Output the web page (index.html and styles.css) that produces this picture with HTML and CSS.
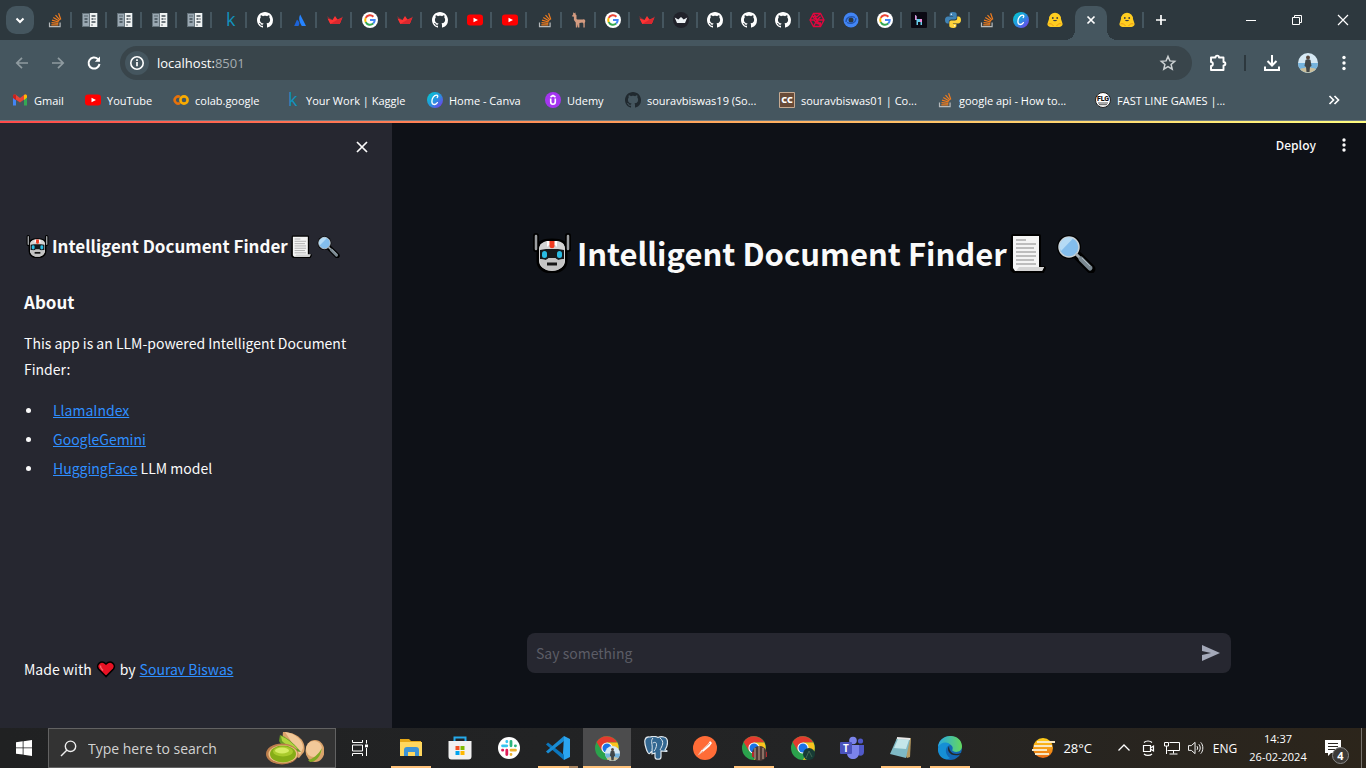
FILE: index.html
```html
<!DOCTYPE html>
<html lang="en">
<head>
<meta charset="utf-8">
<meta name="viewport" content="width=device-width, initial-scale=1">
<title>Intelligent Document Finder</title>
<link rel="stylesheet" href="styles.css">
</head>
<body>
<svg class="sprite" aria-hidden="true">
  <symbol id="so" viewBox="0 0 16 16"><path d="M2.500 10.500v4.200h10.600v-4.200" fill="none" stroke="#b5b9bb" stroke-width="1.200"/><path d="M4.300 12.800h7M4.500 10.600l6.800.7M5 8.200l6.600 1.800M6.300 5.600l5.900 3.400M8.500 3.200l4.500 5M11.600 1.300l2.200 6.200" stroke="#f07c1e" stroke-width="1.200"/></symbol>
  <symbol id="sheet" viewBox="0 0 16 16"><path d="M0 1h16v14H0z" fill="#65737b"/><path d="M1 2h6v12H1z" fill="#9aa8b2"/><path d="M8 1h7v14H8z" fill="#f0f3f3"/><path d="M2.500 4h1m1 0h1m-3 3h3m-3 3h3M9.500 4h4m-4 3h2m1 0h1m-4 3h4m-4 3h1" stroke="#3f4b53" stroke-width="1.300"/></symbol>
  <symbol id="gh" viewBox="0 0 16 16"><path fill="currentColor" d="M8 0C3.580 0 0 3.580 0 8c0 3.540 2.290 6.530 5.470 7.590.4.07.55-.17.55-.38 0-.19-.01-.82-.01-1.490-2.010.37-2.530-.49-2.690-.94-.09-.23-.48-.94-.82-1.130-.28-.15-.68-.52-.01-.53.63-.01 1.080.58 1.230.82.72 1.210 1.870.87 2.330.66.07-.52.28-.87.51-1.070-1.780-.2-3.640-.89-3.640-3.950 0-.87.31-1.590.82-2.150-.08-.2-.36-1.020.08-2.120 0 0 .67-.21 2.200.82.64-.18 1.320-.27 2-.27s1.360.09 2 .27c1.530-1.040 2.200-.82 2.200-.82.44 1.100.16 1.920.08 2.120.51.56.82 1.270.82 2.150 0 3.070-1.870 3.750-3.650 3.950.29.25.54.73.54 1.480 0 1.070-.01 1.930-.01 2.200 0 .21.15.46.55.38A8.010 8.010 0 0 0 16 8c0-4.420-3.580-8-8-8z"/></symbol>
  <symbol id="atl" viewBox="0 0 16 16"><path d="M5 7.500c2.600 2.200 3 4.300 1.500 6.500H2.200z" fill="#1d63d8"/><path d="M8.200 2.500 14 14H9.800C7.200 9.600 6.300 6.300 8.200 2.500z" fill="#2684ff"/></symbol>
  <symbol id="crown" viewBox="0 0 16 16"><path d="M0 4l5.500 4L2.800 11z" fill="#7d3339"/><path d="M16 4.500l-5.500 3.500 2.700 3z" fill="#a8333b"/><path d="M.5 6.500 5.500 8 8 4l2.500 3.500L15 6l-2.300 6H3.300z" fill="#f33"/><path d="M3.300 12 11 7.200l4-1.200-2.300 6z" fill="#d9282f"/></symbol>
  <symbol id="goog" viewBox="0 0 16 16"><circle cx="8" cy="8" r="8" fill="#fff"/><g fill="none" stroke-width="2"><path d="M11.400 4.700A4.800 4.800 0 0 0 3.700 5.900" stroke="#ea4335"/><path d="M3.700 5.900a4.800 4.800 0 0 0 0 4.300" stroke="#fbbc05"/><path d="M3.700 10.100a4.800 4.800 0 0 0 7.500 1.500" stroke="#34a853"/><path d="M11.200 11.600A4.800 4.800 0 0 0 12.700 8H8" stroke="#4285f4"/></g></symbol>
  <symbol id="yt" viewBox="0 0 16 16"><rect y="2.500" width="16" height="11" rx="3" fill="#f00"/><path d="m6.500 5.800 4.500 2.200-4.500 2.200z" fill="#fff"/></symbol>
  <symbol id="llama" viewBox="0 0 16 16"><path d="M2.200 2.200 2 .3l1.200 1L4.500.5v1.700l1 1V7l1 .5H12c1.500-.6 2.600.8 2.200 2.300l-.5 1.200v4.400h-1.300v-3.800l-1-1-3 .4v4.400H7v-3.500l-.8 3.500H4.900l-.2-5L2.900 8V4.800L.8 4.300z" fill="#d49b80"/></symbol>
  <symbol id="blackcrown" viewBox="0 0 16 16"><circle cx="8" cy="8" r="8" fill="#20222a"/><path d="M1.700 5.500 5.300 7.500 8 5l2.700 2.500 3.600-2-2.300 5.500H4z" fill="#edf2f5"/></symbol>
  <symbol id="hex" viewBox="0 0 16 16"><g fill="none" stroke="#e3063e" stroke-width="1.300"><path d="M4.500 1.500h7L15 8l-3.500 6.500h-7L1 8z"/><path d="M4.500 1.500 8 8l-3.500 6.500M11.500 1.500 8 4.700 5 3M15 8H8l-4-2.500M11.500 14.500 8 8l3.500-3.300M1 8h4l3 3.500 4 1M2.800 4.700 8 4.700M12 11H8"/></g></symbol>
  <symbol id="swirl" viewBox="0 0 16 16"><circle cx="8" cy="8" r="7.500" fill="#4285f4"/><circle cx="8" cy="8" r="2.500" fill="#2d383e"/><path d="M3 10C3 5 8 3.500 12 5.500M13 6c0 5-5 6.500-9 4.500" stroke="#2355ae" stroke-width="1.300" fill="none"/></symbol>
  <symbol id="lamaidx" viewBox="0 0 16 16"><rect width="16" height="16" rx="1" fill="#0b0913"/><path d="M4 3l1.500 1V7H11v6H9.500v-3H7v3H5.500V8H4.200z" fill="#68cce9"/><path d="M4 3l1.500 1V8H4.200zM9 7h2v3H9z" fill="#ef8edb"/></symbol>
  <symbol id="py" viewBox="0 0 16 16"><path d="M7.900 0C5 0 4.600 1.200 4.600 2.200V4h3.500v.6H2.800C1.200 4.600 0 5.800 0 8s1 3.600 2.400 3.600h1.400V9.700c0-1.300 1.100-2.300 2.400-2.300h3.600c1.100 0 1.900-.9 1.900-1.900V2.200C11.700.9 10.500 0 7.900 0z" fill="#4083b5"/><path d="M7.900 0C5 0 4.600 1.200 4.600 2.200V4h3.500v.6H2.800C1.200 4.600 0 5.800 0 8s1 3.600 2.400 3.600h1.400V9.700c0-1.300 1.100-2.300 2.400-2.300h3.600c1.100 0 1.900-.9 1.900-1.900V2.200C11.700.9 10.500 0 7.900 0z" fill="#ffd43b" transform="rotate(180 8 8)"/><circle cx="6.300" cy="2.200" r=".7" fill="#fff"/><circle cx="9.700" cy="13.800" r=".7" fill="#fff"/></symbol>
  <linearGradient id="cg" x1="0" y1="0" x2="1" y2="1"><stop offset="0" stop-color="#00d1cf"/><stop offset=".5" stop-color="#2495df"/><stop offset="1" stop-color="#812cef"/></linearGradient>
  <symbol id="canva" viewBox="0 0 16 16"><circle cx="8" cy="8" r="8" fill="url(#cg)"/><path d="M10.200 5.500c1-.9.700-2.300-.7-2.300-2.500 0-4.600 3.300-4.600 6.200 0 3.700 3.200 4.100 5.500 1.200" fill="none" stroke="#fff" stroke-width="1.300" stroke-linecap="round"/></symbol>
  <symbol id="hug" viewBox="0 0 16 16"><path d="M2 7a6 6.200 0 0 1 12 0l1.500 4.500c.5 2-1.500 3.500-4 3.500h-7C2 15 0 13.500.5 11.500z" fill="#ffcd20"/><path d="M1.500 12c2-1 4 .3 5 2m8-2c-2-1-4 .3-5 2" stroke="#ef9c18" fill="none"/><circle cx="5.800" cy="6" r=".9" fill="#3a3b44"/><circle cx="10.200" cy="6" r=".9" fill="#3a3b44"/><path d="M5.800 8c1.200 1.800 3.200 1.800 4.400 0z" fill="#3a3b44"/></symbol>
  <symbol id="gmail" viewBox="0 0 16 16"><path d="M1 4v9.500h3V6z" fill="#4285f4"/><path d="M12 6v7.500h3V4z" fill="#34a853"/><path d="M1 5.500V4c0-1.700 1.700-2 2.800-1.200L8 6l4.200-3.200C13.300 2 15 2.300 15 4v1.500l-7 5z" fill="#ea4335"/><path d="M12 3v5l3-2.500V4c0-1.700-2-2-3-1z" fill="#fbbc04"/><path d="M1 4v2l3 2.200V3C2.500 2 1 2.500 1 4z" fill="#c5221f"/></symbol>
  <symbol id="colab" viewBox="0 0 16 16"><g fill="none" stroke-width="2.600"><path d="M7 5a3.500 3.500 0 1 0 0 6" stroke="#e8710a"/><circle cx="11" cy="8" r="3.600" stroke="#f9ab00"/></g></symbol>
  <symbol id="udemy" viewBox="0 0 16 16"><circle cx="8" cy="8" r="8" fill="#a435f0"/><path d="M5.500 5 8 3.500 10.500 5M5.700 6.500v3.300c0 3.200 4.600 3.200 4.600 0V6.500" fill="none" stroke="#fff" stroke-width="1.600"/></symbol>
  <symbol id="robot" viewBox="0 0 38 40"><path d="M3 3v13M35 3v13" stroke="#000" stroke-width="6" stroke-linecap="round"/><path d="M5 14C5 9 10 7 19 7s14 2 14 7v14c0 7-6 11-14 11S5 35 5 28z" fill="#ccc" stroke="#000" stroke-width="3"/><path d="M3 3v13M35 3v13" stroke="#9a9da0" stroke-width="2.500" stroke-linecap="round"/><path d="M6 15c2-5 5-7 9-7h8c5 0 8 2 9 7v13c0 12-26 12-26 0z" fill="#d3d3d3"/><path d="M14 8h10v6l-2-2h-6l-2 2z" fill="#fff"/><path d="M16.500 8h5v5c0 3-5 3-5 0z" fill="#f03b20"/><path d="M7 17l6-1h12l6 1v9l-6 1-3-2h-6l-3 2-6-1z" fill="#15191c"/><rect x="9" y="18" width="5" height="7" rx="2.500" fill="#29bce4"/><rect x="24" y="18" width="5" height="7" rx="2.500" fill="#29bce4"/><path d="M7 26l6 1 3-2h6l3 2 6-1c0 6-3 12-12 12S7 32 7 26z" fill="#c3c3c3"/><path d="M14 31h10" stroke="#151515" stroke-width="3"/></symbol>
  <symbol id="scroll" viewBox="0 0 36 40"><path d="M3 3h26v32h5l-2 4H5l-3-3z" fill="#fff" stroke="#000" stroke-width="4" stroke-linejoin="round"/><path d="M3 3h26v31h5l-2 4H5l-2-3z" fill="#f4f4f4"/><path d="M9 34h25l-2 4H6z" fill="#d4d4d4"/><path d="M6 7h10M6 11h20M6 15h18M6 19h20M6 23h20M6 27h18M6 31h20" stroke="#aaa" stroke-width="1.500"/></symbol>
  <symbol id="mag" viewBox="0 0 40 40"><circle cx="13" cy="14" r="12" fill="#000"/><path d="M22 23l13 13" stroke="#000" stroke-width="9" stroke-linecap="round"/><circle cx="13" cy="14" r="10" fill="#83bdec" stroke="#c9d2d7" stroke-width="1.500"/><path d="M5 18A9 9 0 0 1 17 5.500z" fill="#b5dbf5"/><path d="m20 21 4 4" stroke="#a3adb3" stroke-width="3"/><path d="m25 26 9 9" stroke="#7b8992" stroke-width="5" stroke-linecap="round"/><path d="m26 25 8 8" stroke="#aebbc1" stroke-width="1"/></symbol>
  <symbol id="man" viewBox="0 0 20 20"><circle cx="10" cy="10" r="10" fill="#d6e9f4"/><path d="M0 10h20a10 10 0 0 1-20 0z" fill="#76b4dd"/><path d="M2 16c5-2 11-2 16 0-4 5-12 5-16 0z" fill="#cbbf9c"/><path d="M7.500 7c1-1 4-1 5 0l1 6-1.500 1-.5 5h-3L8 14l-1.500-1z" fill="#414749"/><circle cx="10" cy="4.500" r="2" fill="#59483e"/></symbol>
  <symbol id="chrome" viewBox="0 0 24 24"><circle cx="12" cy="12" r="12" fill="#2ba24c"/><path d="M1.600 6A12 12 0 0 1 22.400 6.600H12L7 15z" fill="#e33b2e"/><path d="M22.400 6.600A12 12 0 0 1 12 24l5-9.500-5-7.900z" fill="#fcc31e"/><circle cx="12" cy="12" r="5.600" fill="#fff"/><circle cx="12" cy="12" r="4.500" fill="#1a73e8"/></symbol>
</svg>

<header class="browser">
  <div class="tabstrip">
    <button class="tab-search" aria-label="Search tabs"><svg viewBox="0 0 28 28" width="28" height="28"><path d="m10.500 12.500 3.500 3.500 3.500-3.500" fill="none" stroke="#fff" stroke-width="2"/></svg></button>
    <nav class="tabs" aria-label="Tabs">
      <button class="tab" aria-label="Stack Overflow"><svg><use href="#so"/></svg></button>
      <button class="tab" aria-label="Document"><svg><use href="#sheet"/></svg></button>
      <button class="tab" aria-label="Document"><svg><use href="#sheet"/></svg></button>
      <button class="tab" aria-label="Document"><svg><use href="#sheet"/></svg></button>
      <button class="tab" aria-label="Document"><svg><use href="#sheet"/></svg></button>
      <button class="tab" aria-label="Kaggle"><svg class="kaggle" viewBox="0 0 16 16"><text x="4" y="14">k</text></svg></button>
      <button class="tab" aria-label="GitHub"><svg><use href="#gh"/></svg></button>
      <button class="tab" aria-label="Atlassian"><svg><use href="#atl"/></svg></button>
      <button class="tab" aria-label="Streamlit"><svg><use href="#crown"/></svg></button>
      <button class="tab" aria-label="Google"><svg><use href="#goog"/></svg></button>
      <button class="tab" aria-label="Streamlit"><svg><use href="#crown"/></svg></button>
      <button class="tab" aria-label="GitHub"><svg><use href="#gh"/></svg></button>
      <button class="tab" aria-label="YouTube"><svg><use href="#yt"/></svg></button>
      <button class="tab" aria-label="YouTube"><svg><use href="#yt"/></svg></button>
      <button class="tab" aria-label="Stack Overflow"><svg><use href="#so"/></svg></button>
      <button class="tab narrow" aria-label="Llama"><svg><use href="#llama"/></svg></button>
      <button class="tab narrow" aria-label="Google"><svg><use href="#goog"/></svg></button>
      <button class="tab narrow" aria-label="Streamlit"><svg><use href="#crown"/></svg></button>
      <button class="tab narrow" aria-label="Streamlit Cloud"><svg><use href="#blackcrown"/></svg></button>
      <button class="tab narrow" aria-label="GitHub"><svg><use href="#gh"/></svg></button>
      <button class="tab narrow" aria-label="GitHub"><svg><use href="#gh"/></svg></button>
      <button class="tab narrow" aria-label="GitHub"><svg><use href="#gh"/></svg></button>
      <button class="tab narrow" aria-label="Knot"><svg><use href="#hex"/></svg></button>
      <button class="tab narrow" aria-label="Google AI"><svg><use href="#swirl"/></svg></button>
      <button class="tab narrow" aria-label="Google"><svg><use href="#goog"/></svg></button>
      <button class="tab narrow" aria-label="LlamaIndex"><svg><use href="#lamaidx"/></svg></button>
      <button class="tab narrow" aria-label="Python"><svg><use href="#py"/></svg></button>
      <button class="tab narrow" aria-label="Stack Overflow"><svg><use href="#so"/></svg></button>
      <button class="tab narrow" aria-label="Canva"><svg><use href="#canva"/></svg></button>
      <button class="tab narrow last" aria-label="Hugging Face"><svg><use href="#hug"/></svg></button>
      <button class="tab active" aria-label="Close tab"><svg viewBox="0 0 16 16"><path d="m4.500 4.500 7 7m0-7-7 7" stroke="#fff" stroke-width="1.700"/></svg></button>
      <button class="tab narrow after" aria-label="Hugging Face"><svg><use href="#hug"/></svg></button>
      <button class="tab narrow newtab" aria-label="New tab"><svg viewBox="0 0 16 16"><path d="M8 3v10M3 8h10" stroke="#fff" stroke-width="1.700"/></svg></button>
    </nav>
    <div class="winbtns">
      <button aria-label="Minimize"><svg viewBox="0 0 12 12"><path d="M1 6.500h10" stroke="#fff"/></svg></button>
      <button aria-label="Restore"><svg viewBox="0 0 12 12"><path d="M1.500 3.500h7v7h-7zM3.500 3.500v-2h7v7h-2" fill="none" stroke="#fff"/></svg></button>
      <button aria-label="Close"><svg viewBox="0 0 12 12"><path d="m1 1 10 10M11 1 1 11" stroke="#fff" stroke-width="1.200"/></svg></button>
    </div>
  </div>
  <div class="toolbar">
    <div class="navbtns">
      <button aria-label="Back"><svg viewBox="0 0 16 16"><path d="M14 8H3m5-5.200L2.800 8 8 13.200" fill="none" stroke="#8f9ba0" stroke-width="1.700"/></svg></button>
      <button aria-label="Forward"><svg viewBox="0 0 16 16"><path d="M2 8h11M8 2.800 13.200 8 8 13.200" fill="none" stroke="#8f9ba0" stroke-width="1.700"/></svg></button>
      <button aria-label="Reload"><svg viewBox="0 0 16 16"><path d="M13.500 9A5.500 5.500 0 1 1 11.800 4l1.500 1.500" fill="none" stroke="#fff" stroke-width="2"/><path d="M14 1.500v5.300H8.800z" fill="#fff"/></svg></button>
    </div>
    <div class="omnibox">
      <button class="info" aria-label="Site information"><svg viewBox="0 0 16 16"><circle cx="8" cy="8" r="6.200" fill="none" stroke="#fff" stroke-width="1.600"/><path d="M8 7v4.300M8 4.300v1.600" stroke="#fff" stroke-width="1.700"/></svg></button>
      <div class="url">localhost:<span>8501</span></div>
      <button class="star" aria-label="Bookmark"><svg viewBox="0 0 18 18"><path d="m9 2.500 1.900 4.400 4.800.4-3.600 3.200 1.100 4.700L9 12.700l-4.200 2.500 1.100-4.700-3.600-3.200 4.800-.4z" fill="none" stroke="#cdd2d4" stroke-width="1.500"/></svg></button>
    </div>
    <div class="actions">
      <button aria-label="Extensions"><svg viewBox="0 0 20 20"><path d="M3 4.500h4.500C7.500 2 11 2 11 4.500h4.500V9c2.500 0 2.500 3.500 0 3.500V17H3v-4c2.500 0 2.500-4 0-4z" fill="none" stroke="#fff" stroke-width="1.900" stroke-linejoin="round"/></svg></button>
      <i class="divider"></i>
      <button aria-label="Downloads"><svg viewBox="0 0 20 20"><path d="M10 2v10M5.500 8 10 12.500 14.500 8M3 13.500V17h14v-3.500" fill="none" stroke="#fff" stroke-width="2"/></svg></button>
      <button aria-label="Profile"><svg viewBox="0 0 20 20"><use href="#man"/></svg></button>
      <button aria-label="Menu"><svg viewBox="0 0 20 20" fill="#fff"><circle cx="10" cy="4.500" r="1.700"/><circle cx="10" cy="10" r="1.700"/><circle cx="10" cy="15.500" r="1.700"/></svg></button>
    </div>
  </div>
  <nav class="bookmarks" aria-label="Bookmarks">
    <a href="#"><svg><use href="#gmail"/></svg>Gmail</a>
    <a href="#"><svg><use href="#yt"/></svg>YouTube</a>
    <a href="#"><svg><use href="#colab"/></svg>colab.google</a>
    <a href="#"><svg class="kaggle" viewBox="0 0 16 16"><text x="4" y="14">k</text></svg>Your Work | Kaggle</a>
    <a href="#"><svg><use href="#canva"/></svg>Home - Canva</a>
    <a href="#"><svg><use href="#udemy"/></svg>Udemy</a>
    <a href="#"><svg class="dark"><use href="#gh"/></svg>souravbiswas19 (So...</a>
    <a href="#"><svg viewBox="0 0 16 16"><path d="M.5.500h15v15H.5z" fill="#694b38" stroke="#c6aa92"/><text x="8" y="11" text-anchor="middle" font-weight="800" font-size="9" fill="#fff">CC</text></svg>souravbiswas01 | Co...</a>
    <a href="#"><svg><use href="#so"/></svg>google api - How to...</a>
    <a href="#"><svg class="flg" viewBox="0 0 16 16"><circle cx="8" cy="8" r="7.500" fill="#fff" stroke="#222"/><text x="8" y="9" text-anchor="middle" font-weight="900" font-size="7" fill="#111">FLG</text><path d="M3 11h10M4 12.700h8" stroke="#555"/></svg>FAST LINE GAMES |...</a>
    <button class="more" aria-label="More bookmarks"><svg viewBox="0 0 16 16"><path d="M3.500 4 7.500 8l-4 4M8.500 4l4 4-4 4" fill="none" stroke="#fff" stroke-width="1.700"/></svg></button>
  </nav>
</header>

<div class="app">
  <aside class="sidebar">
    <button class="close" aria-label="Close sidebar"><svg viewBox="0 0 14 14"><path d="m2 2 10 10M12 2 2 12" stroke="#fafafa" stroke-width="1.700"/></svg></button>
    <h2 class="side-title"><svg><use href="#robot"/></svg><span>Intelligent Document Finder</span><svg><use href="#scroll"/></svg><svg class="glass"><use href="#mag"/></svg></h2>
    <h2>About</h2>
    <p>This app is an LLM-powered Intelligent Document Finder:</p>
    <ul>
      <li><a href="#">LlamaIndex</a></li>
      <li><a href="#">GoogleGemini</a></li>
      <li><a href="#">HuggingFace</a> LLM model</li>
    </ul>
    <p class="made">Made with <svg viewBox="0 0 20 18" aria-label="love" role="img"><path d="M10 16.500 2.500 9C-.5 5 5 -1 10 4c5-5 10.500 1 7.500 5z" fill="#e81224" stroke="#000" stroke-width="1.600"/><path d="M4.500 5.500c-.5 2 1 3.500 2.500 5" stroke="#f4696f" stroke-width="1.400" fill="none"/></svg> by <a href="#">Sourav Biswas</a></p>
  </aside>
  <main class="main">
    <div class="app-bar">
      <button class="deploy">Deploy</button>
      <button class="kebab" aria-label="App menu"><svg viewBox="0 0 16 16" fill="#fafafa"><circle cx="8" cy="3" r="1.700"/><circle cx="8" cy="8" r="1.700"/><circle cx="8" cy="13" r="1.700"/></svg></button>
    </div>
    <div class="content">
      <h1><svg class="e-robot"><use href="#robot"/></svg><span>Intelligent Document Finder</span><svg class="e-scroll"><use href="#scroll"/></svg><svg class="e-mag"><use href="#mag"/></svg></h1>
      <form class="chat">
        <input type="text" placeholder="Say something" aria-label="Say something">
        <button type="button" aria-label="Send"><svg viewBox="0 0 20 18"><path d="M1 1l18 8L1 17v-6l9-2-9-2z" fill="#a3a8b8"/></svg></button>
      </form>
    </div>
  </main>
</div>

<footer class="taskbar">
  <button class="start" aria-label="Start"><svg viewBox="0 0 16 16" fill="#fff"><path d="M0 2.300 6.700 1.300v6.200H0zM7.500 1.200 16 0v7.500H7.500zM0 8.300h6.700v6.300L0 13.700zM7.500 8.300H16V16l-8.500-1.200z"/></svg></button>
  <label class="search">
    <svg class="lens" viewBox="0 0 17 17"><path d="M1 16l6-6" stroke="#eee" stroke-width="1.400"/><circle cx="10.500" cy="6.300" r="5.200" fill="none" stroke="#eee" stroke-width="1.400"/></svg>
    <input type="text" placeholder="Type here to search" aria-label="Type here to search">
    <svg class="nuts" viewBox="0 0 58 34"><path d="M17 1c14 0 24 9 21 20l-5 6C24 23 15 13 17 1z" fill="#dba36b"/><path d="M19 1c10 1 18 8 18 16l-3 7z" fill="#f2c999"/><path d="M14 4c9 3 16 11 21 17C26 20 16 16 13 10z" fill="#679b24"/><path d="M15 5c7 3 12 8 17 13-7-1-12-4-16-8z" fill="#afd43e"/><ellipse cx="16" cy="23" rx="16" ry="10.500" fill="#bd7e4c"/><ellipse cx="17" cy="23" rx="14.500" ry="9" fill="#eec487"/><ellipse cx="17" cy="23" rx="13" ry="8.500" fill="#86ad16"/><ellipse cx="17" cy="20.500" rx="10" ry="5" fill="#a9cb2c"/><ellipse cx="16" cy="19.500" rx="7" ry="3" fill="#d6ec63"/><ellipse cx="49" cy="20" rx="9.500" ry="11" fill="#dba36b"/><ellipse cx="48" cy="18" rx="8" ry="8" fill="#f2c999"/><path d="M42 29c5-1 10-5 14-12-1 8-6 14-12 14z" fill="#81aa23"/></svg>
  </label>
  <button class="taskview" aria-label="Task view"><svg viewBox="0 0 16 16"><path d="M.5 0v2.500h10V0M.5 16v-2.500h10V16M.5 5h10v6H.5zM14.500 0v3.500M14.500 8v8" fill="none" stroke="#fff"/><path d="M13 4.500h3v2.800h-3z" fill="#fff"/></svg></button>
  <nav class="apps" aria-label="Applications">
    <button class="open" aria-label="File Explorer"><svg viewBox="0 0 24 24"><path d="M1 3h9l2 2h10v15H1z" fill="#e6a817"/><path d="M1 6h22v14H1z" fill="#ffd75e"/><path d="M5 20v-6c0-2 1-3 3-3h9c2 0 3 1 3 3v6h-4v-4H9v4z" fill="#3d93d6"/></svg></button>
    <button aria-label="Microsoft Store"><svg viewBox="0 0 24 24"><path d="M6.500 7V1.500h11V7" fill="none" stroke="#25a9ea" stroke-width="2"/><path d="M.5 5h23v15.500a3 3 0 0 1-3 3h-17a3 3 0 0 1-3-3z" fill="#f1f1f1"/><path d="M7.500 10h4v4h-4z" fill="#f25022"/><path d="M12.500 10h4v4h-4z" fill="#7fba00"/><path d="M7.500 15h4v4h-4z" fill="#00a4ef"/><path d="M12.500 15h4v4h-4z" fill="#ffb900"/></svg></button>
    <button aria-label="Slack"><svg viewBox="0 0 24 24"><circle cx="12" cy="12" r="11" fill="#fff"/><g stroke-width="2.800" stroke-linecap="round"><path d="M5.500 9.800h4.300M9.800 5.500v.3" stroke="#36c5f0"/><path d="M14 5.500v4.300M18.300 9.800h.2" stroke="#2eb67d"/><path d="M14 14.200h4.500M14 18.300v.2" stroke="#ecb22e"/><path d="M9.800 14.200v4.300M5.500 14.200h.3" stroke="#e01e5a"/></g></svg></button>
    <button class="open stacked" aria-label="Visual Studio Code"><svg viewBox="0 0 24 24"><path d="M18 0l6 3v18l-6 3-1-7z" fill="#2ba5ef"/><path d="M2 6.500 18 19v5L0 8.500z" fill="#0b76bd"/><path d="M2 17.500 18 5V0L0 15.500z" fill="#198cd4"/></svg></button>
    <button class="open current" aria-label="Chrome"><svg viewBox="0 0 28 28"><use href="#chrome" width="24" height="24" x="2" y="2"/><use href="#man" x="12" y="12" width="15" height="15"/></svg></button>
    <button aria-label="PostgreSQL"><svg viewBox="0 0 24 24"><path d="M6 1C0 0 0 6 2 12c1 4 3 7 4 5l2-2v3l3-1v4c0 3 6 3 6 0v-6l5 .5c2 0 1-1-1-1.500 3-4 4-12-1-13-3-.7-5 0-6 .5C11-.5 9 .5 6 1z" fill="#336791" stroke="#dfe7ed" stroke-width="1.200"/><path d="M9 2c-3 3 0 6-1 12M16 2c5 4 2 8 0 12M9 7c5-3 4 5 1 8" fill="none" stroke="#dfe7ed"/></svg></button>
    <button aria-label="Postman"><svg viewBox="0 0 24 24"><circle cx="12" cy="12" r="12" fill="#ff6c37"/><path d="M4.500 19.500 9 13.500l6-5.500 2-3 2 2-2.500 3.500-6 5z" fill="#fff"/><path d="m9 14 8-7M5 19l5-4" stroke="#e5a48c"/></svg></button>
    <button class="open" aria-label="Chrome, second profile"><svg viewBox="0 0 28 28"><use href="#chrome" width="24" height="24" x="2" y="2"/><circle cx="19.500" cy="19.500" r="7.500" fill="#4c3a36"/><path d="M15 14v11m4-13v14m4-12v11" stroke="#9e8374" stroke-width="1.500"/><path d="M12 18h2v5h-2zm14 0h1v5h-1z" fill="#b5282c"/></svg></button>
    <button aria-label="Chrome, third profile"><svg viewBox="0 0 28 28"><use href="#chrome" width="24" height="24" x="2" y="2"/><circle cx="20" cy="20" r="6" fill="#173b35"/><path d="m17 24 3-7 3 6" stroke="#416551" fill="none"/></svg></button>
    <button aria-label="Teams"><svg viewBox="0 0 24 24"><circle cx="13" cy="4.500" r="3.800" fill="#7b83eb"/><circle cx="20.500" cy="5" r="2.600" fill="#5059c9"/><path d="M17 9h7v7c0 5-7 5-7 0z" fill="#5059c9"/><path d="M7 9h12v8c0 8-12 8-12 0z" fill="#7b83eb"/><rect y="6" width="12" height="12" rx="1" fill="#4b53bc"/><text x="6" y="15.500" text-anchor="middle" font-size="10" font-weight="700" fill="#fff">T</text></svg></button>
    <button class="open" aria-label="Notepad"><svg viewBox="0 0 24 24"><path d="m7 3 15-1-1 19-3 1z" fill="#b59a61"/><path d="m8 2 13 1-4 19-16-4z" fill="#7fb9c4"/><path d="m9 3 11 1-3 9-12-1z" fill="#c4e6e9"/><path d="m8 2 13 1" stroke="#e9e9e9" stroke-width="2"/></svg></button>
    <button class="open" aria-label="Edge"><svg viewBox="0 0 24 24"><linearGradient id="eg"><stop offset="0" stop-color="#29a8e4"/><stop offset="1" stop-color="#65d85c"/></linearGradient><circle cx="12" cy="12" r="12" fill="#1267b4"/><path d="M0 11C1-3 23-4 24 10c0 6-6 7-9 5-2-1 1-2-1-5-3-4-10-3-14 1z" fill="url(#eg)"/><path d="M0 12c2-6 10-7 12-3-5 1-6 9 0 13-6 4-13-3-12-10z" fill="#168fd5"/><path d="M11 10c-3 4 1 11 10 9 2-.5 2.500-1 2-2-7 3-12-1-12-7z" fill="#23282b"/></svg></button>
  </nav>
  <div class="tray">
    <button class="weather"><svg viewBox="0 0 24 22"><defs><linearGradient id="sun" x2="0" y2="1"><stop stop-color="#ffcf18"/><stop offset="1" stop-color="#ed6b14"/></linearGradient></defs><circle cx="12" cy="11" r="10" fill="url(#sun)"/><path d="M6 5h18M3 9h18M1 13h15M4 17h14" stroke="#f8e7c2" stroke-width="1.800"/></svg>28°C</button>
    <div class="sys">
      <button aria-label="Hidden icons"><svg viewBox="0 0 16 16"><path d="m2.500 10.500 5.500-5.500 5.500 5.500" fill="none" stroke="#fff" stroke-width="1.300"/></svg></button>
      <button aria-label="Meet now"><svg viewBox="0 0 16 16"><path d="M3.500 5.500h7v6h-7zM10.500 8l3-2v5l-3-2M4 2.500C6 .5 10 .5 12 2.500M4 14c2 1.800 6 1.800 8 0" fill="none" stroke="#fff" stroke-width="1.200"/></svg></button>
      <button aria-label="Network"><svg viewBox="0 0 16 16"><path d="M5.500 2.500h10v8H3.500M9.500 10.500v3M5.500 14h8M.5 2.500h4v3.500h-4zM2.500 6v8" fill="none" stroke="#fff"/></svg></button>
      <button aria-label="Volume"><svg viewBox="0 0 17 16"><path d="M.5 5.500h3l4-3.500v12l-4-3.500h-3zM9.500 6c1 1 1 3 0 4M11.500 4c2 2 2 6 0 8M13.500 2c3 3 3 9 0 12" fill="none" stroke="#fff"/></svg></button>
    </div>
    <button class="lang">ENG</button>
    <button class="clock"><span>14:37</span><span>26-02-2024</span></button>
    <button class="notif" aria-label="4 notifications"><svg viewBox="0 0 16 16"><path d="M0 0h16v13H6l-3 3v-3H0z" fill="#fff"/><path d="M3 3.500h10M3 6.500h10M3 9.500h7" stroke="#2b2722"/></svg><b>4</b></button>
    <i class="peek"></i>
  </div>
</footer>
</body>
</html>
```

FILE: styles.css
```css
* { box-sizing: border-box; }

body {
  margin: 0;
  min-height: 100vh;
  display: flex;
  flex-direction: column;
  background: #0e1117;
  color: #fff;
  font-family: "Open Sans", "Noto Sans", sans-serif;
  font-size: 12px;
}

button {
  display: flex;
  align-items: center;
  justify-content: center;
  padding: 0;
  border: 0;
  background: none;
  color: inherit;
  font: inherit;
}

svg { display: block; flex: none; }
.sprite { position: absolute; width: 0; height: 0; }

/* Browser frame */
.browser { background: #45565f; border-bottom: 1px solid #6f7c83; }

.tabstrip {
  display: flex;
  height: 40px;
  background: #2d383e;
}
.tab-search {
  width: 28px;
  height: 28px;
  margin: 6px 3px 0 6px;
  border-radius: 10px;
  background: #45565f;
}
.tabs { display: flex; flex: 1; }
.tab { position: relative; width: 35px; height: 40px; }
.tab.narrow { width: 34px; }
.tab svg { width: 16px; height: 16px; }
.tab:not(.active):not(.last):not(.newtab)::after {
  content: "";
  position: absolute;
  right: 0;
  top: 12px;
  width: 2px;
  height: 16px;
  background: #45565f;
}
.tab.active {
  width: 32px;
  height: 34px;
  margin: 6px 3px 0;
  padding-bottom: 6px;
  border-radius: 10px 10px 0 0;
  background: #45565f;
}
.tab.active::before,
.tab.active::after {
  content: "";
  position: absolute;
  bottom: 0;
  width: 10px;
  height: 10px;
}
.tab.active::before { right: 100%; background: radial-gradient(circle at 0 0, transparent 10px, #45565f 10px); }
.tab.active::after { left: 100%; background: radial-gradient(circle at 100% 0, transparent 10px, #45565f 10px); }
.kaggle text { fill: #1292bd; font-size: 18px; }

.winbtns { display: flex; }
.winbtns button { width: 46px; }
.winbtns svg { width: 12px; height: 12px; }

.toolbar {
  display: flex;
  align-items: center;
  height: 46px;
  background: #45565f;
}
.navbtns { display: flex; width: 120px; padding-left: 4px; }
.navbtns button { width: 36px; }
.navbtns svg { width: 16px; height: 16px; }
.omnibox {
  display: flex;
  flex: 1;
  align-items: center;
  height: 34px;
  padding: 0 15px 0 5px;
  border-radius: 17px;
  background: #39454b;
}
.info { width: 24px; height: 24px; border-radius: 12px; background: #45565f; }
.info svg { width: 16px; height: 16px; }
.url { flex: 1; padding-left: 8px; font-size: 13px; }
.url span { color: #a5adb1; }
.star svg { width: 18px; height: 18px; }
.actions { display: flex; align-items: center; padding: 0 12px 0 16px; gap: 16px; }
.actions svg { width: 20px; height: 20px; }
.divider { width: 2px; height: 16px; background: #2d383e; }

.bookmarks {
  display: grid;
  grid-template-columns: 73px 88px 111px 143px 118px 80px 154px 158px 158px 150px 1fr;
  align-items: center;
  height: 34px;
  padding: 0 24px 6px 12px;
  font-size: 11px;
}
.bookmarks a {
  display: flex;
  align-items: center;
  gap: 6px;
  color: #fff;
  text-decoration: none;
  white-space: nowrap;
}
.bookmarks svg { width: 16px; height: 16px; }
.bookmarks .dark { color: #20292f; }
.flg text { font-family: Roboto, sans-serif; }
.more { justify-self: end; }

/* Application */
.app {
  flex: 1;
  display: flex;
  position: relative;
  color: #fafafa;
  font-family: "Noto Sans CJK JP", "Noto Sans CJK SC", sans-serif;
  font-size: 14px;
  line-height: 26px;
}
.app::before {
  content: "";
  position: absolute;
  inset: 0 0 auto;
  height: 2px;
  background: linear-gradient(90deg, #ff4b4b, #ffa45c 50%, #fffd80);
}
.app a { color: #2f8fff; text-decoration: underline; }

.sidebar {
  display: flex;
  flex-direction: column;
  width: 392px;
  padding: 16px 24px 46px;
  background: #262730;
}
.close { align-self: flex-end; width: 12px; height: 20px; }
.close svg { width: 14px; height: 14px; }
.sidebar h2 {
  margin: 0 0 16px;
  font-size: 17px;
  font-weight: 700;
  line-height: 24px;
}
.sidebar .side-title {
  display: flex;
  align-items: center;
  margin: 77px 0 32px;
  padding-left: 2px;
  white-space: nowrap;
}
.side-title svg { width: 23px; height: 23px; }
.side-title span { padding: 0 2px 0 3px; }
.side-title .glass { margin-left: 4px; }
.sidebar p { margin: 0 0 14px; }
.sidebar ul { margin: 0; padding-left: 29px; list-style: none; }
.sidebar li { position: relative; line-height: 29px; }
.sidebar li::before {
  content: "";
  position: absolute;
  left: -27px;
  top: 12px;
  width: 5px;
  height: 5px;
  border-radius: 50%;
  background: #fafafa;
}
.sidebar .made { display: flex; align-items: center; gap: 4px; margin: auto 0 0; }
.made svg { width: 20px; height: 18px; }

.main { flex: 1; display: flex; flex-direction: column; }
.app-bar {
  display: flex;
  justify-content: flex-end;
  align-items: center;
  gap: 20px;
  padding: 11px 14px 0 0;
}
.deploy { font-size: 12px; font-weight: 500; }
.kebab svg { width: 16px; height: 16px; }
.content {
  flex: 1;
  display: flex;
  flex-direction: column;
  justify-content: space-between;
  width: 100%;
  max-width: 736px;
  margin: 0 auto;
  padding: 73px 16px 55px;
}
h1 {
  display: flex;
  align-items: center;
  margin: 0;
  padding-left: 5px;
  font-size: 31px;
  font-weight: 700;
  line-height: 44px;
  white-space: nowrap;
}
h1 span { padding: 0 3px 0 5px; }
.e-robot { width: 40px; height: 40px; }
.e-scroll { width: 36px; height: 40px; }
.e-mag { width: 40px; height: 40px; margin-left: 10px; }

.chat {
  display: flex;
  align-items: center;
  height: 40px;
  padding: 0 10px 0 9px;
  border-radius: 8px;
  background: #262730;
}
.chat input {
  flex: 1;
  padding: 0;
  border: 0;
  outline: 0;
  background: none;
  color: #fafafa;
  font: inherit;
}
.chat input::placeholder { color: #5c5d66; opacity: 1; }
.chat svg { width: 20px; height: 18px; }

/* Taskbar */
.taskbar {
  display: flex;
  height: 40px;
  background: linear-gradient(90deg, #202122, #232425 60%, #2c251b);
}
.start, .taskview { width: 48px; }
.start svg, .taskview svg { width: 16px; height: 16px; }
.search {
  display: flex;
  align-items: center;
  width: 288px;
  padding: 0 11px;
  border: 1px solid #626262;
  background: #333;
}
.lens { width: 17px; height: 17px; }
.search input {
  flex: 1;
  min-width: 0;
  padding: 0 0 0 11px;
  border: 0;
  outline: 0;
  background: none;
  color: #fff;
  font: inherit;
  font-size: 14px;
}
.search input::placeholder { color: #d2d2d2; opacity: 1; }
.nuts { width: 58px; height: 34px; }
.apps { display: flex; gap: 1px; padding-left: 3px; }
.apps button { position: relative; width: 48px; }
.apps svg { width: 24px; height: 24px; }
.apps svg[viewBox="0 0 28 28"] { width: 28px; height: 28px; }
.apps .open::after {
  content: "";
  position: absolute;
  bottom: 0;
  left: 4px;
  right: 4px;
  height: 2px;
  background: #ffc27a;
}
.apps .stacked::after { background: linear-gradient(90deg, #ffc27a 31px, #a98560 31px); }
.apps .current { background: #4c4c4d; }
.apps .current::after { left: 0; right: 0; }

.tray { display: flex; flex: 1; justify-content: flex-end; }
.weather { gap: 8px; margin-right: 24px; font-size: 13px; }
.weather svg { width: 24px; height: 22px; }
.sys { display: flex; gap: 8px; padding-right: 9px; }
.sys svg { width: 16px; height: 16px; }
.lang { width: 24px; font-size: 12px; }
.clock {
  flex-direction: column;
  width: 82px;
  line-height: 18px;
  font-size: 11px;
}
.notif { position: relative; width: 28px; }
.notif svg { width: 16px; height: 16px; }
.notif b {
  position: absolute;
  left: 13px;
  top: 19px;
  width: 17px;
  height: 17px;
  border: 1px solid #888;
  border-radius: 50%;
  background: #3d3a37;
  font-size: 11px;
  line-height: 15px;
}
.peek { width: 5px; margin-left: 14px; border-left: 1px solid #77736d; }
```
